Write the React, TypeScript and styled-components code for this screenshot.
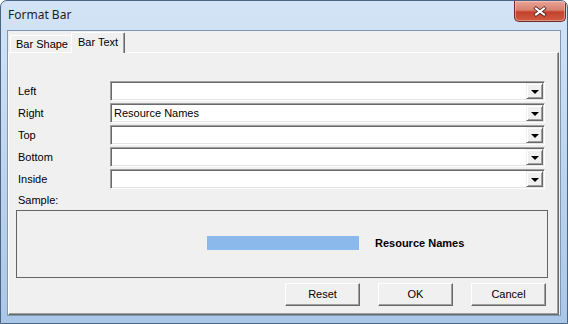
import { Fragment } from "react";
import styled, { createGlobalStyle } from "styled-components";

const GlobalStyle = createGlobalStyle`
  html, body {
    margin: 0;
    padding: 0;
    background: #ffffff;
  }
  * {
    box-sizing: border-box;
  }
`;

const Window = styled.div`
  width: 568px;
  height: 324px;
  border: 1px solid #4a6584;
  border-radius: 7px 7px 0 0;
  background: linear-gradient(180deg, #d4e4f6 0%, #c3d8f0 40%, #b7cfeb 70%, #aac6e8 100%);
  display: flex;
  flex-direction: column;
  padding: 0 6px 7px;
  overflow: hidden;
`;

const TitleBar = styled.div`
  height: 29px;
  display: flex;
  align-items: flex-start;
  justify-content: space-between;
`;

const Title = styled.span`
  font-family: "Noto Sans", "Open Sans", sans-serif;
  font-size: 12px;
  color: #1e1e1e;
  padding: 6px 0 0 1px;
  line-height: 16px;
`;

const CloseButton = styled.div`
  width: 52px;
  height: 21px;
  margin-right: -5px;
  border: 1px solid #6a2d24;
  border-top: none;
  border-radius: 0 0 5px 5px;
  background: linear-gradient(180deg, #e8a597 0%, #d98070 45%, #c4412c 55%, #cf5a43 100%);
  box-shadow: inset 0 0 0 1px rgba(255, 220, 210, 0.45);
  display: flex;
  align-items: center;
  justify-content: center;
`;

const Client = styled.div`
  flex: 1;
  display: flex;
  flex-direction: column;
  background: #f0f0f0;
  border: 1px solid #7f98b6;
  font-family: "Liberation Sans", Arial, sans-serif;
  font-size: 11px;
  color: #000;
`;

const TabStrip = styled.div`
  height: 21px;
  display: flex;
  align-items: flex-end;
  padding-left: 2px;
`;

const Tab = styled.div<{ $active?: boolean; $width: number }>`
  width: ${(p) => p.$width}px;
  height: ${(p) => (p.$active ? 21 : 17)}px;
  margin-bottom: ${(p) => (p.$active ? -1 : 0)}px;
  position: relative;
  z-index: ${(p) => (p.$active ? 1 : 0)};
  background: #f0f0f0;
  border-top: 1px solid #ffffff;
  border-left: 1px solid #ffffff;
  border-right: ${(p) => (p.$active ? "1px solid #696969" : "none")};
  box-shadow: ${(p) => (p.$active ? "inset -1px 0 0 #a0a0a0" : "none")};
  border-radius: 2px 2px 0 0;
  padding: ${(p) => (p.$active ? "3px 0 0 6px" : "2px 0 0 5px")};
  line-height: 13px;
  white-space: nowrap;
`;

const Panel = styled.div`
  flex: 1;
  margin-right: 1px;
  display: flex;
  flex-direction: column;
  border-top: 1px solid #ffffff;
  border-left: 1px solid #ffffff;
  border-right: 1px solid #696969;
  border-bottom: 1px solid #696969;
  box-shadow: inset -1px -1px 0 #a0a0a0;
  padding: 28px 10px 0 7px;
`;

const FormGrid = styled.div`
  display: grid;
  grid-template-columns: 92px 1fr;
  grid-auto-rows: 20px;
  row-gap: 2px;
  padding: 0 3px 0 2px;
  align-items: center;
`;

const Label = styled.span`
  line-height: 13px;
`;

const SampleLabel = styled(Label)`
  display: block;
  margin: 5px 0 3px 2px;
`;

const Combo = styled.div`
  height: 20px;
  display: flex;
  align-items: center;
  background: #ffffff;
  border-top: 1px solid #a0a0a0;
  border-left: 1px solid #a0a0a0;
  border-right: 1px solid #ffffff;
  border-bottom: 1px solid #ffffff;
  box-shadow: inset 1px 1px 0 #696969, inset -1px -1px 0 #e3e3e3;
  padding: 1px 1px 1px 2px;
`;

const ComboText = styled.span`
  flex: 1;
  line-height: 13px;
  padding-left: 1px;
  white-space: nowrap;
`;

const DropButton = styled.div`
  width: 17px;
  height: 16px;
  background: #f0f0f0;
  border-top: 1px solid #f0f0f0;
  border-left: 1px solid #f0f0f0;
  border-right: 1px solid #696969;
  border-bottom: 1px solid #696969;
  box-shadow: inset 1px 1px 0 #ffffff, inset -1px -1px 0 #a0a0a0;
  display: flex;
  align-items: center;
  justify-content: center;
`;

const Arrow = styled.span`
  width: 0;
  height: 0;
  border-left: 4px solid transparent;
  border-right: 4px solid transparent;
  border-top: 4px solid #000;
  margin-top: 1px;
`;

const SampleBox = styled.div`
  height: 68px;
  border: 1px solid #646464;
  display: flex;
  align-items: center;
  padding: 0 0 2px 190px;
`;

const SampleBar = styled.div`
  width: 152px;
  height: 14px;
  background: #8cb9ec;
`;

const SampleText = styled.span`
  margin-left: 16px;
  font-weight: bold;
  font-size: 11px;
`;

const ButtonRow = styled.div`
  display: flex;
  justify-content: flex-end;
  gap: 18px;
  margin-top: 5px;
  padding-right: 2px;
`;

const Button = styled.div`
  width: 75px;
  height: 23px;
  background: #f0f0f0;
  border-top: 1px solid #ffffff;
  border-left: 1px solid #ffffff;
  border-right: 1px solid #696969;
  border-bottom: 1px solid #696969;
  box-shadow: inset -1px -1px 0 #a0a0a0;
  display: flex;
  align-items: center;
  justify-content: center;
  line-height: 13px;
`;

const rows = [
  { label: "Left", value: "" },
  { label: "Right", value: "Resource Names" },
  { label: "Top", value: "" },
  { label: "Bottom", value: "" },
  { label: "Inside", value: "" },
];

export default function App() {
  return (
    <>
      <GlobalStyle />
      <Window>
        <TitleBar>
          <Title>Format Bar</Title>
          <CloseButton>
            <svg width="14" height="11" viewBox="0 0 14 11">
              <path d="M3 2.5 L11 8.5 M11 2.5 L3 8.5" stroke="#4a2a26" strokeWidth="3.6" strokeLinecap="square" />
              <path d="M3 2.5 L11 8.5 M11 2.5 L3 8.5" stroke="#ffffff" strokeWidth="2" strokeLinecap="square" />
            </svg>
          </CloseButton>
        </TitleBar>
        <Client>
          <TabStrip>
            <Tab $width={61}>Bar Shape</Tab>
            <Tab $width={54} $active>
              Bar Text
            </Tab>
          </TabStrip>
          <Panel>
            <FormGrid>
              {rows.map((row) => (
                <Fragment key={row.label}>
                  <Label>{row.label}</Label>
                  <Combo>
                    <ComboText>{row.value}</ComboText>
                    <DropButton>
                      <Arrow />
                    </DropButton>
                  </Combo>
                </Fragment>
              ))}
            </FormGrid>
            <SampleLabel>Sample:</SampleLabel>
            <SampleBox>
              <SampleBar />
              <SampleText>Resource Names</SampleText>
            </SampleBox>
            <ButtonRow>
              <Button>Reset</Button>
              <Button>OK</Button>
              <Button>Cancel</Button>
            </ButtonRow>
          </Panel>
        </Client>
      </Window>
    </>
  );
}
